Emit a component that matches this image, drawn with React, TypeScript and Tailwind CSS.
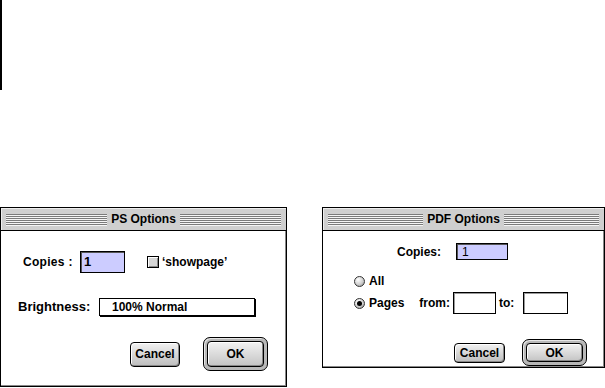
import React from "react"

const font = "font-['Liberation_Sans',Arial,sans-serif] font-bold text-black"

function Stripes() {
  return (
    <div className="flex flex-1 flex-col gap-px">
      {[0, 1, 2, 3, 4, 5].map((i) => (
        <div key={i} className="h-px bg-[#7a7a7a] shadow-[0_1px_0_#f4f4f4]" />
      ))}
    </div>
  )
}

function TitleBar({ title }: { title: string }) {
  return (
    <div className="flex h-[23px] items-center gap-[4px] border-b border-black bg-[#cfcfcf] px-[5px] shadow-[inset_1px_1px_0_#eeeeee]">
      <Stripes />
      <span className="text-[12px] leading-none">{title}</span>
      <Stripes />
    </div>
  )
}

function Button({ label, w, h }: { label: string; w: number; h: number }) {
  return (
    <div
      className="flex items-center justify-center rounded-[4px] border border-black bg-gradient-to-b from-[#f2f2f2] to-[#bdbdbd] text-[12px] shadow-[inset_-1px_-1px_0_#888,inset_1px_1px_0_#fff]"
      style={{ width: w, height: h }}
    >
      {label}
    </div>
  )
}

function DefaultButton({ w, h }: { w: number; h: number }) {
  return (
    <div
      className="flex rounded-[7px] border border-black bg-[#b8b8b8] p-[3px] shadow-[inset_1px_1px_0_#e6e6e6]"
      style={{ width: w, height: h }}
    >
      <div className="flex flex-1 items-center justify-center rounded-[4px] border border-black bg-gradient-to-b from-[#f2f2f2] to-[#c4c4c4] text-[12px] shadow-[inset_-1px_-1px_0_#888,inset_1px_1px_0_#fff]">
        OK
      </div>
    </div>
  )
}

function Radio({ on }: { on?: boolean }) {
  return (
    <div className="flex h-[11px] w-[11px] items-center justify-center rounded-full border border-[#333] bg-[radial-gradient(circle_at_35%_30%,#ffffff,#cfcfcf_55%,#8a8a8a)]">
      {on && <div className="h-[5px] w-[5px] rounded-full bg-black" />}
    </div>
  )
}

function Field({ w, h }: { w: number; h: number }) {
  return (
    <div
      className="border border-black bg-white shadow-[inset_1px_1px_0_#999]"
      style={{ width: w, height: h }}
    />
  )
}

function PSOptions() {
  return (
    <div className="flex h-[180px] w-[287px] flex-col border border-black bg-white shadow-[inset_-1px_-1px_0_#888]">
      <TitleBar title="PS Options" />
      <div className="mt-[20px] flex h-[22px] items-center pl-[22px]">
        <span className="w-[57px] text-[12px] tracking-[0.3px]">Copies :</span>
        <div className="flex h-[22px] w-[45px] items-center border border-black bg-[#ccccff] pl-[3px] text-[13px] shadow-[inset_1px_1px_0_#555]">
          1
        </div>
        <div className="ml-[22px] h-[12px] w-[12px] border border-black bg-[#d6d6d6] shadow-[inset_1px_1px_0_#fff,inset_-1px_-1px_0_#888]" />
        <span className="ml-[3px] text-[12px]">‘showpage’</span>
      </div>
      <div className="mt-[25px] flex h-[17px] items-center pl-[17px]">
        <span className="w-[81px] text-[13px]">Brightness:</span>
        <div className="flex h-[18px] w-[156px] items-center border border-black pl-[12px] text-[12px] shadow-[1px_1px_0_#000]">
          100% Normal
        </div>
      </div>
      <div className="mt-[22px] flex items-center justify-end gap-[23px] pr-[18px]">
        <Button label="Cancel" w={50} h={25} />
        <DefaultButton w={65} h={34} />
      </div>
    </div>
  )
}

function PDFOptions() {
  return (
    <div className="ml-[35px] flex h-[161px] w-[283px] flex-col border border-black bg-white shadow-[inset_-1px_-1px_0_#888]">
      <TitleBar title="PDF Options" />
      <div className="mt-[12px] flex h-[17px] items-center pl-[74px]">
        <span className="w-[59px] text-[12px]">Copies:</span>
        <div className="flex h-[17px] w-[52px] items-center border border-black bg-[#ccccff] pl-[5px] text-[12px] font-normal shadow-[inset_1px_1px_0_#555]">
          1
        </div>
      </div>
      <div className="mt-[14px] flex h-[14px] items-center gap-[4px] pl-[31px]">
        <Radio />
        <span className="text-[12px]">All</span>
      </div>
      <div className="mt-[4px] flex h-[22px] items-center pl-[31px]">
        <Radio on />
        <span className="ml-[4px] text-[12px]">Pages</span>
        <span className="ml-[15px] text-[12px]">from:</span>
        <div className="ml-[3px]">
          <Field w={43} h={22} />
        </div>
        <span className="ml-[3px] text-[12px]">to:</span>
        <div className="ml-[9px]">
          <Field w={45} h={22} />
        </div>
      </div>
      <div className="mt-[25px] flex items-center justify-end gap-[17px] pr-[17px]">
        <Button label="Cancel" w={51} h={20} />
        <DefaultButton w={65} h={27} />
      </div>
    </div>
  )
}

export default function App() {
  return (
    <div className={`flex h-[388px] w-[605px] flex-col overflow-hidden bg-white ${font}`}>
      <div className="h-[90px] w-[2px] bg-black" />
      <div className="mt-[117px] flex items-start">
        <PSOptions />
        <PDFOptions />
      </div>
    </div>
  )
}
